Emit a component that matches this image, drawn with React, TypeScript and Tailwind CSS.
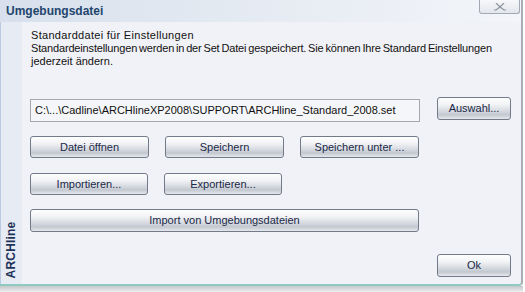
import React from "react";

const btn =
  "flex items-center justify-center rounded-[3px] border border-[#737b8a] bg-[linear-gradient(180deg,#fefefe_0%,#f3f4f6_30%,#d6dae0_62%,#c3c8d0_80%,#e6e8ec_100%)] text-[11px] text-[#1b2848]";

function Btn({ label, className }: { label: string; className: string }) {
  return <button className={`${btn} ${className}`}>{label}</button>;
}

export default function App() {
  return (
    <div className="relative h-[292px] w-[525px] overflow-hidden bg-white font-['Liberation_Sans',Arial,sans-serif]">
      <div className="flex h-[286px] w-[523px] flex-col rounded-br-[4px] border-r-2 border-b-2 border-r-[#a8adb6] border-b-[#8fc9bf] bg-[#f1f2f7]">
        {/* Title */}
        <div className="relative flex h-[22px] shrink-0 items-center bg-[linear-gradient(90deg,#d7e0ec_0%,#e4eaf2_45%,#f3f5f9_100%)] pl-[6px]">
          <span className="text-[12px] font-bold text-[#23456d]">Umgebungsdatei</span>
          <div className="absolute right-[1px] top-0 flex h-[14px] w-[41px] items-end justify-center overflow-hidden rounded-b-[3px] border border-t-0 border-[#a3a9b3] bg-[linear-gradient(180deg,#f7f8fa,#e3e6eb)]">
            <svg width="14" height="8" viewBox="0 0 14 8" className="mb-[2px]">
              <path d="M3 0 L7 4 L11 0 M7 4 L3 7 L1 7 M7 4 L11 7 L13 7" stroke="#8c939e" strokeWidth="1.2" fill="none" />
            </svg>
          </div>
        </div>

        <div className="flex flex-1">
          {/* side strip */}
          <div className="flex w-[22px] shrink-0 flex-col justify-end border-l border-[#b9cbe0] bg-[#e7ebf3] pb-[2px]">
            <div className="flex h-[64px] items-center justify-center">
              <span className="-rotate-90 whitespace-nowrap text-[12px] font-bold tracking-[0.2px] text-[#1f3358]">ARCHline</span>
            </div>
          </div>

          {/* content */}
          <div className="flex flex-1 flex-col pl-[8px] pt-[7px]">
            <div className="pl-[1px] text-[11px] leading-[13px] text-[#111]">
              <p className="tracking-[0.3px]">Standarddatei für Einstellungen</p>
              <p className="whitespace-nowrap tracking-[-0.16px] [word-spacing:-1px]">
                Standardeinstellungen werden in der Set Datei gespeichert. Sie können Ihre Standard Einstellungen
              </p>
              <p>jederzeit ändern.</p>
            </div>

            <div className="mt-[29px] flex items-start">
              <div className="mt-[2px] flex h-[23px] w-[390px] items-center border border-[#a5a8ae] bg-[#f5f6f9] pl-[4px] text-[11px] text-[#111]">
                C:\...\Cadline\ARCHlineXP2008\SUPPORT\ARCHline_Standard_2008.set
              </div>
              <Btn label="Auswahl..." className="ml-[17px] h-[23px] w-[74px]" />
            </div>

            <div className="mt-[14px] flex gap-[16px]">
              <Btn label="Datei öffnen" className="h-[22px] w-[119px]" />
              <Btn label="Speichern" className="h-[22px] w-[119px]" />
              <Btn label="Speichern unter ..." className="h-[22px] w-[119px]" />
            </div>

            <div className="mt-[15px] flex gap-[16px]">
              <Btn label="Importieren..." className="h-[22px] w-[118px]" />
              <Btn label="Exportieren..." className="h-[22px] w-[118px]" />
            </div>

            <Btn label="Import von Umgebungsdateien" className="mt-[14px] h-[23px] w-[389px]" />

            <div className="mt-[22px] flex">
              <Btn label="Ok" className="ml-[407px] h-[23px] w-[74px]" />
            </div>
          </div>
        </div>
      </div>
      <div className="h-[6px] w-[523px] bg-[linear-gradient(180deg,#c4c6c9,#eeeeef)]" />
    </div>
  );
}
